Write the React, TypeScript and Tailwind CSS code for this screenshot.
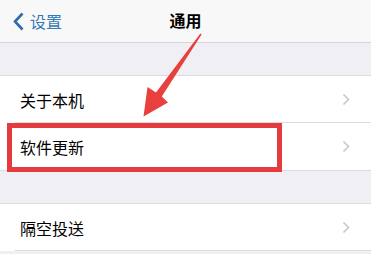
import React from 'react';

const font = { fontFamily: '"Noto Sans CJK SC", "Noto Sans", sans-serif' };

const Chevron: React.FC = () => (
  <svg width="8" height="13" viewBox="0 0 8 13" className="shrink-0">
    <path d="M1.5 1.5 L6.5 6.5 L1.5 11.5" fill="none" stroke="#c7c7cc" strokeWidth="1.6" />
  </svg>
);

const Row: React.FC<{ label: string; last?: boolean }> = ({ label, last }) => (
  <div className="relative flex h-[47px] items-center justify-between bg-white pl-[20px] pr-[21px]">
    <span className="text-[16px] leading-none text-black">{label}</span>
    <Chevron />
    {!last && <div className="absolute bottom-0 left-[15px] right-0 h-px bg-[#dcdce0]" />}
  </div>
);

const App: React.FC = () => {
  return (
    <div className="relative h-[254px] w-[371px] overflow-hidden bg-[#efeff4]" style={font}>
      <header className="relative flex h-[43px] items-center border-b border-[#d6d6da] bg-[#f8f8f8]">
        <div className="flex items-center pl-[13px] text-[16px] text-[#3478b4]">
          <svg width="12" height="19" viewBox="0 0 12 19" className="mr-[5px]">
            <path d="M9.5 1.5 L2 9.5 L9.5 17.5" fill="none" stroke="#2f6ca6" strokeWidth="2.6" strokeLinejoin="miter" />
          </svg>
          <span className="leading-none">设置</span>
        </div>
        <h1 className="absolute left-1/2 top-[12px] -translate-x-1/2 text-[16px] font-semibold leading-none text-black">
          通用
        </h1>
      </header>

      <div className="h-[32px]" />

      <section className="border-y border-[#dcdce0]">
        <Row label="关于本机" />
        <Row label="软件更新" last />
      </section>

      <div className="h-[32px]" />

      <section className="border-t border-[#dcdce0]">
        <Row label="隔空投送" />
      </section>

      <div className="absolute left-[7px] top-[123px] h-[49px] w-[275px] border-[5px] border-[#e63b3e]" />

      <svg className="pointer-events-none absolute inset-0" width="371" height="254" viewBox="0 0 371 254">
        <polygon
          points="200.4,33.6 201.6,34.4 161.8,96.6 168,102.5 143.5,116.5 147.5,87 156,92.6"
          fill="#e8403f"
        />
      </svg>
    </div>
  );
};

export default App;
